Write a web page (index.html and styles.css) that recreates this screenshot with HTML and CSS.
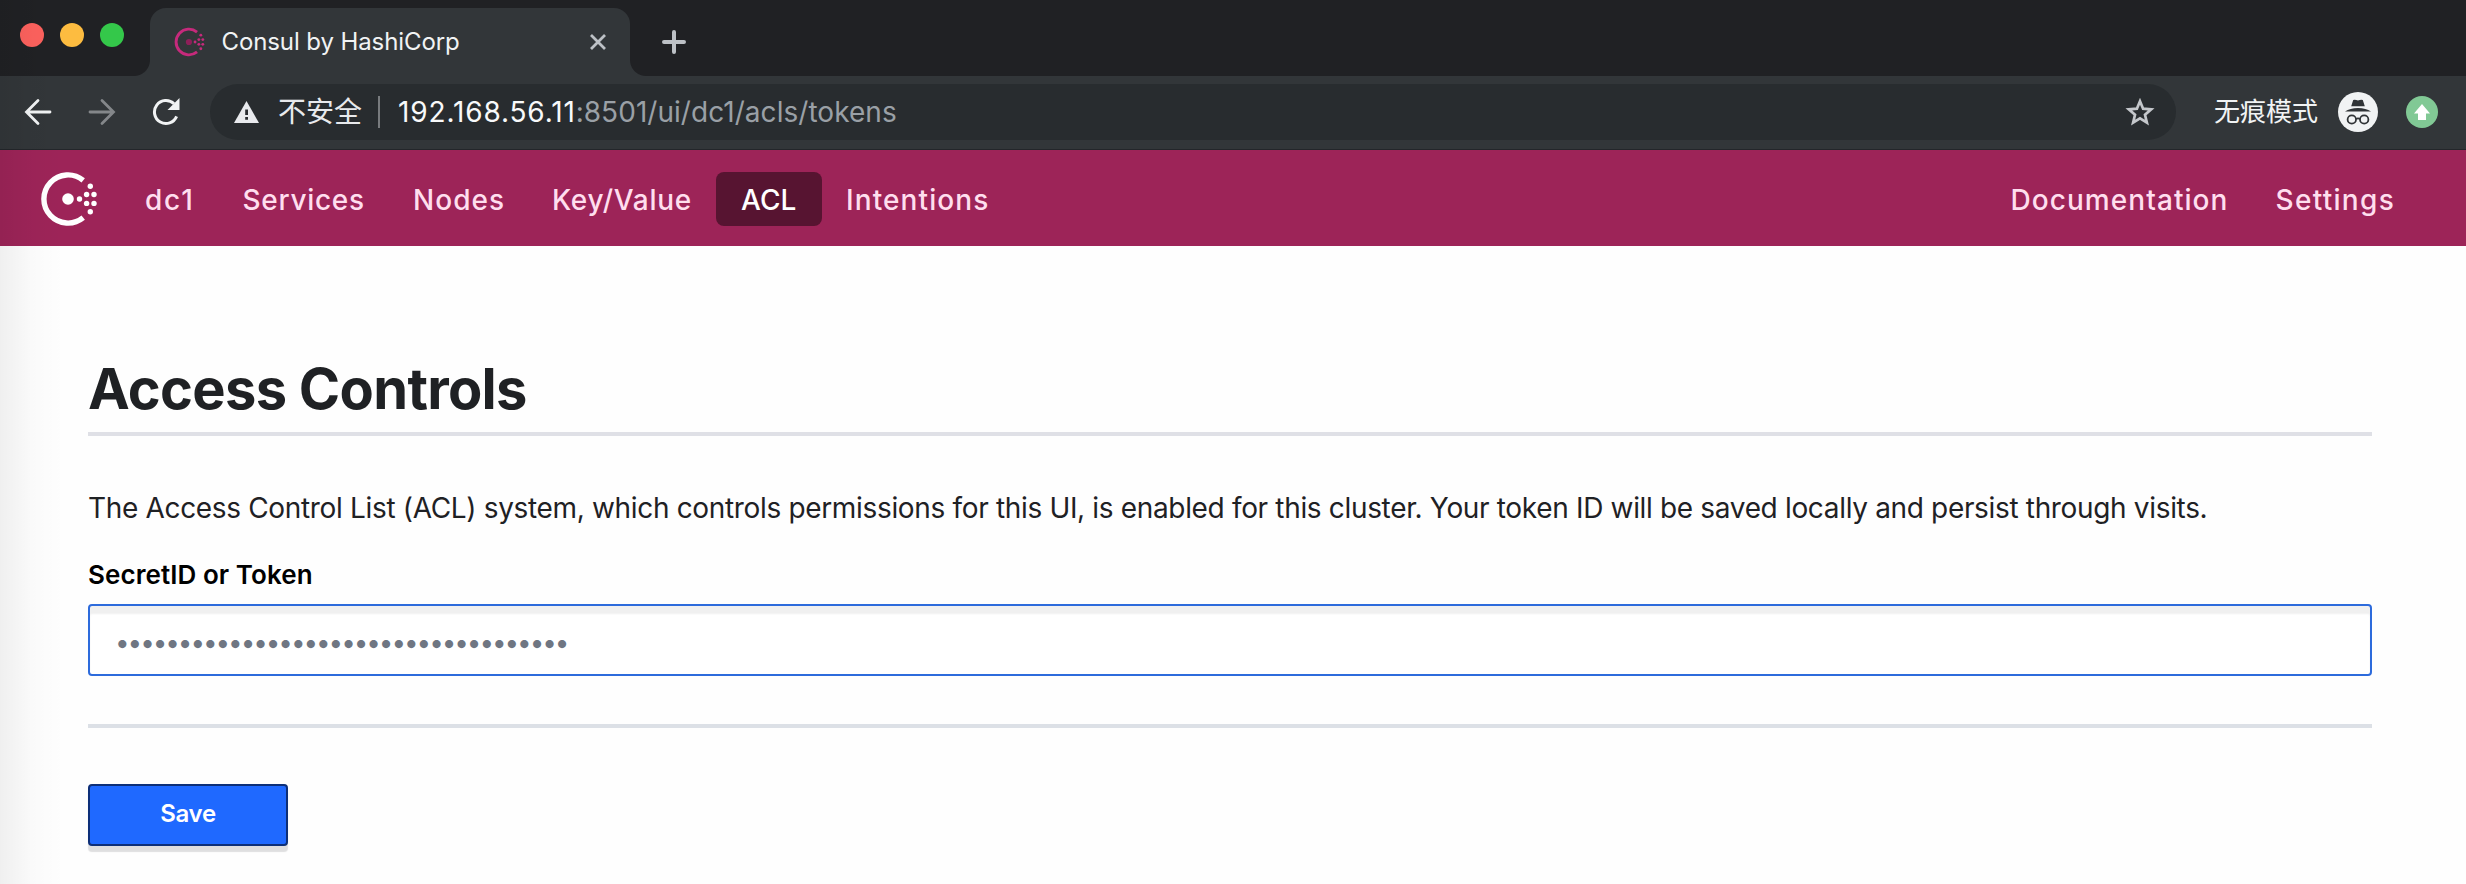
FILE: index.html
```html
<!DOCTYPE html>
<html lang="en">
<head>
<meta charset="utf-8">
<title>Consul by HashiCorp</title>
<link rel="stylesheet" href="styles.css">
</head>
<body>
<svg class="defs" aria-hidden="true">
  <symbol id="consul" viewBox="-28 -28 60 56">
    <path class="ring" d="M15.2-18.7A24.1 24.1 0 1 0 15.2 18.7" fill="none" stroke="currentColor" stroke-width="5.4"/>
    <circle class="core" r="5.8"/>
    <g fill="currentColor">
      <circle cx="11.5" cy="0" r="2.7"/>
      <circle cx="18.6" cy="-4.5" r="2.7"/><circle cx="26" cy="-4.5" r="2.7"/>
      <circle cx="18.6" cy="4.4" r="2.7"/><circle cx="26" cy="4.4" r="2.7"/>
      <circle cx="22.3" cy="-12.8" r="2.7"/><circle cx="22.3" cy="12.7" r="2.7"/>
    </g>
  </symbol>
</svg>
<div class="window">
  <header class="tabstrip">
    <div class="lights"><i class="light red"></i><i class="light amber"></i><i class="light green"></i></div>
    <div class="tab">
      <svg class="favicon"><use href="#consul"/></svg>
      <span class="tab-title">Consul by HashiCorp</span>
      <svg class="tab-close" viewBox="0 0 20 20"><path d="M3 3l14 14M17 3L3 17"/></svg>
    </div>
    <svg class="new-tab" viewBox="0 0 24 24"><path d="M12 2v20M2 12h20"/></svg>
  </header>

  <div class="toolbar">
    <svg class="tool back" viewBox="0 0 28 28"><path d="M26 14H3M14 2.5L2.5 14 14 25.5"/></svg>
    <svg class="tool forward" viewBox="0 0 28 28"><path d="M2 14h23M14 2.5L25.5 14 14 25.5"/></svg>
    <svg class="tool reload" viewBox="0 0 28 28"><path d="M24.6 18.4A11.5 11.5 0 1 1 22 5.8"/><path class="solid" d="M27.5 0v12H15.5z"/></svg>
    <div class="omnibox">
      <svg class="warning" viewBox="0 0 25 22"><path d="M12.5 0L25 22H0z" fill="#e8eaed"/><path d="M11.2 8.5h2.8v5.5h-2.8zM11.2 16h2.8v2.8h-2.8z" fill="#282c2f"/></svg>
      <span class="insecure">不安全</span>
      <span class="divider"></span>
      <span class="host">192.168.56.11</span><span class="path">:8501/ui/dc1/acls/tokens</span>
      <svg class="star" viewBox="0 0 30 29"><path d="M15 3.2l3.1 7.5 8.1.7-6.2 5.3 1.9 7.9-6.9-4.2-6.9 4.2L10 16.7l-6.2-5.3 8.1-.7z"/></svg>
    </div>
    <span class="incognito-label">无痕模式</span>
    <svg class="incognito" viewBox="0 0 40 40">
      <circle cx="20" cy="20" r="20" fill="#f1f3f4"/>
      <g fill="#303437"><path d="M15.2 8q2.2-.5 4.8.6 2.6-1.1 4.8-.6l2 6.2H13.2z"/><path d="M7 19.5q5-3.500 13-3.500t13 3.500z"/></g>
      <g fill="none" stroke="#303437" stroke-width="1.8"><circle cx="13.8" cy="27.5" r="4.2"/><circle cx="26.2" cy="27.5" r="4.2"/><path d="M18 27q2-1.2 4 0"/></g>
    </svg>
    <svg class="update" viewBox="0 0 32 32"><circle cx="16" cy="16" r="16" fill="#81c995"/><path d="M16 8l8 9.5h-4V24h-8v-6.5H8z" fill="#fff"/></svg>
  </div>

  <nav class="navbar">
    <svg class="logo"><use href="#consul"/></svg>
    <a class="item dc">dc1</a>
    <a class="item services">Services</a>
    <a class="item nodes">Nodes</a>
    <a class="item kv">Key/Value</a>
    <a class="item acl">ACL</a>
    <a class="item intentions">Intentions</a>
    <a class="item docs">Documentation</a>
    <a class="item settings">Settings</a>
  </nav>

  <main class="content">
    <h1 class="title">Access Controls</h1>
    <p class="intro">The Access Control List (ACL) system, which controls permissions for this UI, is enabled for this cluster. Your token ID will be saved locally and persist through visits.</p>
    <label class="label" for="secret">SecretID or Token</label>
    <div class="field" id="secret">••••••••••••••••••••••••••••••••••••</div>
    <hr class="rule">
    <button class="save" type="button">Save</button>
  </main>
  <div class="edge-shade"></div>
</div>
</body>
</html>
```
FILE: styles.css
```css
* { box-sizing: border-box; }

body {
  margin: 0;
  font-family: Inter, "Noto Sans CJK SC", sans-serif;
  background: #fefefe;
}

svg { flex: none; display: block; }
.defs { position: absolute; width: 0; height: 0; }

.window {
  position: relative;
  width: 2466px;
  height: 884px;
  overflow: hidden;
}

/* Tab strip */
.tabstrip {
  display: flex;
  height: 76px;
  background: #202124;
}
.lights {
  display: flex;
  gap: 16px;
  width: 150px;
  padding: 23px 0 0 20px;
}
.light { width: 24px; height: 24px; border-radius: 50%; }
.red { background: #fc615d; }
.amber { background: #fdbc40; }
.green { background: #34c84a; }

.tab {
  position: relative;
  display: flex;
  align-items: center;
  width: 480px;
  height: 68px;
  margin-top: 8px;
  padding: 0 22px 0 24px;
  border-radius: 16px 16px 0 0;
  background: #323639;
}
.tab::before,
.tab::after {
  content: "";
  position: absolute;
  bottom: 0;
  width: 16px;
  height: 16px;
}
.tab::before { left: -16px; background: radial-gradient(circle at 0 0, transparent 15.5px, #323639 16.5px); }
.tab::after { right: -16px; background: radial-gradient(circle at 100% 0, transparent 15.5px, #323639 16.5px); }
.favicon { width: 32px; height: 30px; color: #c62a7c; fill: #8e1f59; }
.tab-title {
  flex: 1;
  padding-left: 15.5px;
  font-size: 24px;
  line-height: 30px;
  letter-spacing: -0.1px;
  color: #f1f3f4;
}
.tab-close { width: 20px; height: 20px; stroke: #bdc1c6; stroke-width: 2.8; }
.new-tab {
  width: 24px;
  height: 24px;
  margin: 30px 0 0 32px;
  stroke: #bdc1c6;
  stroke-width: 4;
  stroke-linecap: round;
}

/* Toolbar */
.toolbar {
  display: flex;
  align-items: center;
  height: 74px;
  padding: 0 28px 1px 24px;
  border-bottom: 1px solid #23262a;
  background: #323639;
}
.tool {
  width: 28px;
  height: 28px;
  margin-right: 36px;
  fill: none;
  stroke: #f1f3f4;
  stroke-width: 2.8;
  stroke-linecap: round;
}
.forward { stroke: #84878a; }
.reload { margin-right: 30px; stroke-width: 3; stroke-linecap: butt; }
.solid { fill: #f1f3f4; stroke: none; }
.omnibox {
  display: flex;
  align-items: center;
  width: 1966px;
  height: 56px;
  padding: 0 21px 0 24px;
  border-radius: 28px;
  background: #282c2f;
  font-size: 28px;
  line-height: 36px;
}
.warning { width: 25px; height: 22px; }
.insecure {
  margin-left: 19px;
  padding-bottom: 1px;
  color: #e8eaed;
}
.divider {
  width: 2px;
  height: 32px;
  margin: 0 18px 0 16px;
  background: #787b7e;
}
.host { color: #f8f9fa; letter-spacing: 0.86px; }
.path { color: #9aa0a6; letter-spacing: 0.04px; }
.star {
  width: 30px;
  height: 29px;
  margin-left: auto;
  fill: none;
  stroke: #c4c7cb;
  stroke-width: 2.7;
}
.incognito-label {
  width: 124px;
  margin-left: 38px;
  padding-bottom: 0;
  font-size: 26px;
  line-height: 36px;
  color: #f1f3f4;
}
.incognito { width: 40px; height: 40px; }
.update { width: 32px; height: 32px; margin-left: auto; }

/* Consul navigation */
.navbar {
  display: flex;
  align-items: flex-start;
  height: 96px;
  padding: 22px 48px 0 40px;
  background: #9d2458;
}
.logo { width: 60px; height: 56px; margin: -1.5px 21px 0 0; color: #fff; fill: #fff; }
.item {
  flex: none;
  height: 54px;
  padding: 1px 0 0 24px;
  border-radius: 8px;
  font-size: 28px;
  font-weight: 500;
  line-height: 54px;
  white-space: nowrap;
  color: #ffdeee;
}
.dc { width: 97.5px; letter-spacing: 1.8px; }
.services { width: 170.5px; letter-spacing: 0.7px; }
.nodes { width: 139px; letter-spacing: 1.05px; }
.kv { width: 188px; letter-spacing: 0.7px; }
.acl {
  width: 106px;
  padding-left: 25px;
  background: #571431;
  color: #fff;
  letter-spacing: 0.1px;
}
.intentions { letter-spacing: 1.1px; }
.docs { margin-left: auto; width: 265px; letter-spacing: 1.06px; }
.settings { width: 166.5px; letter-spacing: 1.3px; }

/* Page */
.content {
  display: flex;
  flex-direction: column;
  width: 2284px;
  margin: 0 0 0 88px;
  padding-top: 111px;
}
.title {
  margin: 0;
  height: 79px;
  border-bottom: 4px solid #dfe0e6;
  font-size: 56px;
  font-weight: 700;
  line-height: 64px;
  letter-spacing: -0.7px;
  color: #1f2124;
}
.intro {
  margin: 52px 0 0;
  font-size: 28px;
  line-height: 40px;
  letter-spacing: -0.335px;
  white-space: nowrap;
  color: #1f2124;
}
.label {
  margin-top: 31px;
  font-size: 26px;
  font-weight: 600;
  line-height: 32px;
  letter-spacing: 0.07px;
  color: #000;
}
.field {
  height: 72px;
  margin-top: 13px;
  padding: 3px 25px 0;
  border: 2px solid #2d6bdc;
  border-radius: 4px;
  background: #fff;
  box-shadow: inset 0 8px 2px #f0f0f0;
  font-size: 26px;
  line-height: 68px;
  letter-spacing: -2.06px;
  color: #6f7682;
}
.rule {
  width: 100%;
  height: 4px;
  margin: 48px 0 0;
  border: 0;
  background: #dce0e6;
}
.save {
  width: 200px;
  height: 62px;
  margin-top: 56px;
  padding: 0 0 3px;
  border: 2px solid #0d2f78;
  border-radius: 4px;
  background: #1f69ff;
  box-shadow: 0 6px 1px #dfdfe0;
  font: 600 24px Inter, sans-serif;
  letter-spacing: -0.3px;
  color: #fff;
}

/* Soft shade along the left side of the window */
.edge-shade {
  position: absolute;
  inset: 0 auto 0 0;
  width: 64px;
  background: linear-gradient(90deg, rgba(0, 0, 0, 0.06), rgba(0, 0, 0, 0.015) 50%, transparent);
  pointer-events: none;
}
```
